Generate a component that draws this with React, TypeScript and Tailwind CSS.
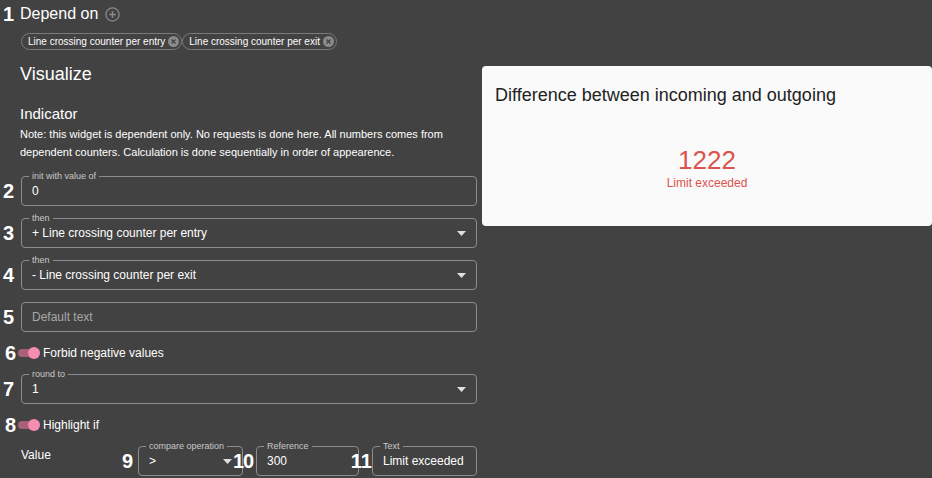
import React from "react";

const font = { fontFamily: '"Liberation Sans", Arial, sans-serif' };

function Num({ n, className = "" }: { n: string; className?: string }) {
  return (
    <span className={`text-[20px] font-bold leading-none text-white ${className}`}>{n}</span>
  );
}

function Arrow() {
  return (
    <svg width="9" height="5" viewBox="0 0 9 5" className="shrink-0">
      <path d="M0 0 H9 L4.5 5 Z" fill="#e0e0e0" />
    </svg>
  );
}

function Field({
  label,
  value,
  select,
  placeholder,
  className = "",
}: {
  label?: string;
  value?: string;
  select?: boolean;
  placeholder?: string;
  className?: string;
}) {
  return (
    <div
      className={`relative flex h-[30px] shrink-0 items-center rounded-[4px] border border-[#8c8c8c] pl-[10px] pr-[10px] ${className}`}
    >
      {label && (
        <span className="absolute left-[7px] top-[-7px] bg-[#424242] px-[3px] text-[9px] leading-[12px] text-[#c8c8c8]">
          {label}
        </span>
      )}
      <span
        className={`flex-1 whitespace-nowrap text-[12px] leading-none ${
          placeholder ? "text-[#a8a8a8]" : "text-white"
        }`}
      >
        {placeholder ?? value}
      </span>
      {select && <Arrow />}
    </div>
  );
}

function Toggle() {
  return (
    <div className="relative h-[12px] w-[22px] shrink-0">
      <div className="absolute left-0 top-[2px] h-[8px] w-[20px] rounded-full bg-[#a8607a]" />
      <div className="absolute right-0 top-0 h-[12px] w-[12px] rounded-full bg-[#f38db2]" />
    </div>
  );
}

function Chip({ text }: { text: string }) {
  return (
    <div className="flex h-[17px] items-center gap-[3px] rounded-full border border-[#7a7a7a] pl-[6px] pr-[2px]">
      <span className="text-[10px] leading-none text-white">{text}</span>
      <svg width="11" height="11" viewBox="0 0 12 12">
        <circle cx="6" cy="6" r="6" fill="#8a8a8a" />
        <path d="M3.8 3.8 L8.2 8.2 M8.2 3.8 L3.8 8.2" stroke="#424242" strokeWidth="1.4" />
      </svg>
    </div>
  );
}

export default function App() {
  return (
    <main className="flex h-[478px] w-[932px] overflow-hidden bg-[#424242]" style={font}>
      {/* left column: settings */}
      <section className="flex w-[482px] shrink-0 flex-col pl-[3px] pr-[5px]">
        <div className="mt-[5px] flex h-[18px] items-center">
          <Num n="1" className="w-[17px]" />
          <span className="text-[16px] leading-none text-white">Depend on</span>
          <svg width="15" height="15" viewBox="0 0 16 16" className="ml-[7px]">
            <circle cx="8" cy="8" r="7" fill="none" stroke="#8a8a8a" strokeWidth="1.4" />
            <path d="M8 4.5 V11.5 M4.5 8 H11.5" stroke="#8a8a8a" strokeWidth="1.6" />
          </svg>
        </div>

        <div className="ml-[18px] mt-[10px] flex">
          <Chip text="Line crossing counter per entry" />
          <Chip text="Line crossing counter per exit" />
        </div>

        <h2 className="ml-[17px] mt-[13px] text-[18px] leading-[22px] text-white">Visualize</h2>
        <h3 className="ml-[17px] mt-[20px] text-[15px] leading-[18px] text-white">Indicator</h3>
        <p className="ml-[17px] mt-[2px] text-[11px] leading-[18px] text-white">
          Note: this widget is dependent only. No requests is done here. All numbers comes from
          <br />
          dependent counters. Calculation is done sequentially in order of appearence.
        </p>

        <div className="mt-[15px] flex items-center">
          <Num n="2" className="w-[18px]" />
          <Field label="init with value of" value="0" className="flex-1" />
        </div>
        <div className="mt-[12px] flex items-center">
          <Num n="3" className="w-[18px]" />
          <Field label="then" value="+ Line crossing counter per entry" select className="flex-1" />
        </div>
        <div className="mt-[12px] flex items-center">
          <Num n="4" className="w-[18px]" />
          <Field label="then" value="- Line crossing counter per exit" select className="flex-1" />
        </div>
        <div className="mt-[12px] flex items-center">
          <Num n="5" className="w-[18px]" />
          <Field placeholder="Default text" className="flex-1" />
        </div>

        <div className="mt-[14px] flex h-[14px] items-center">
          <Num n="6" className="ml-[2px] w-[13px]" />
          <Toggle />
          <span className="ml-[3px] text-[12px] leading-none text-white">Forbid negative values</span>
        </div>

        <div className="mt-[14px] flex items-center">
          <Num n="7" className="w-[18px]" />
          <Field label="round to" value="1" select className="flex-1" />
        </div>

        <div className="mt-[14px] flex h-[14px] items-center">
          <Num n="8" className="ml-[2px] w-[13px]" />
          <Toggle />
          <span className="ml-[3px] text-[12px] leading-none text-white">Highlight if</span>
        </div>

        <div className="mt-[14px] flex items-center">
          <span className="ml-[18px] w-[101px] pb-[12px] text-[12px] leading-none text-white">
            Value
          </span>
          <Num n="9" className="w-[16px]" />
          <Field label="compare operation" value=">" select className="w-[105px] pr-[6px]" />
          <Num n="10" className="z-10 -ml-[10px] w-[23px] tracking-[-1px]" />
          <Field label="Reference" value="300" className="w-[103px]" />
          <Num n="11" className="z-10 -ml-[10px] w-[23px] text-right" />
          <Field label="Text" value="Limit exceeded" className="w-[105px]" />
        </div>
      </section>

      {/* right: widget preview */}
      <section className="flex-1 pt-[66px]">
        <div className="flex h-[160px] flex-col rounded-[4px] bg-[#fafafa] px-[13px]">
          <h1 className="mt-[19px] text-[18px] leading-[20px] text-[#222]">
            Difference between incoming and outgoing
          </h1>
          <div className="mt-[41px] flex flex-col items-center">
            <span className="text-[26px] leading-[28px] text-[#d9534f]">1222</span>
            <span className="mt-[2px] text-[12px] leading-[14px] text-[#d9534f]">Limit exceeded</span>
          </div>
        </div>
      </section>
    </main>
  );
}
